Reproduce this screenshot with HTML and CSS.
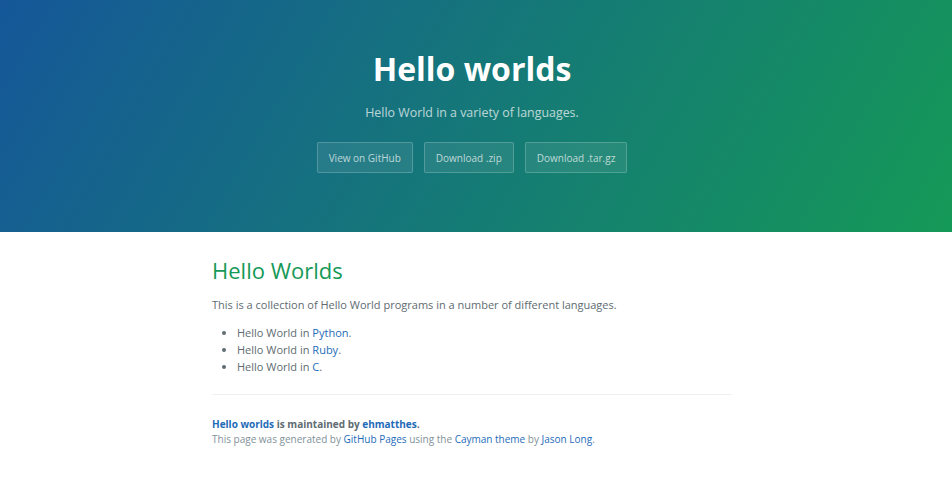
FILE: index.html
```html
<!DOCTYPE html>
<html lang="en">
<head>
<meta charset="UTF-8">
<title>Hello worlds</title>
<link rel="stylesheet" href="styles.css">
</head>
<body>
<section class="page-header">
  <h1 class="project-name">Hello worlds</h1>
  <h2 class="project-tagline">Hello World in a variety of languages.</h2>
  <div class="btns">
    <a href="#" class="btn">View on GitHub</a>
    <a href="#" class="btn">Download .zip</a>
    <a href="#" class="btn">Download .tar.gz</a>
  </div>
</section>
<section class="main-content">
  <h1 class="heading">Hello Worlds</h1>
  <p class="intro">This is a collection of Hello World programs in a number of different languages.</p>
  <ul class="list">
    <li>Hello World in <a href="#">Python</a>.</li>
    <li>Hello World in <a href="#">Ruby</a>.</li>
    <li>Hello World in <a href="#">C</a>.</li>
  </ul>
  <footer class="site-footer">
    <span class="owner"><a href="#">Hello worlds</a> is maintained by <a href="#">ehmatthes</a>.</span>
    <span class="credits">This page was generated by <a href="#">GitHub Pages</a> using the <a href="#">Cayman theme</a> by <a href="#">Jason Long</a>.</span>
  </footer>
</section>
</body>
</html>
```
FILE: styles.css
```css
html, body {
  margin: 0;
  padding: 0;
}
body {
  font-family: "Open Sans", "Helvetica Neue", Helvetica, Arial, sans-serif;
  color: #606c71;
  background: #fff;
}
a {
  color: #1e6bb8;
  text-decoration: none;
}
.page-header {
  box-sizing: border-box;
  height: 232px;
  padding: 47px 8px 0 0;
  display: flex;
  flex-direction: column;
  align-items: center;
  color: #fff;
  background-color: #159957;
  background-image: linear-gradient(120deg, #155799, #159957);
}
.project-name {
  margin: 0;
  font-size: 32px;
  line-height: 44px;
  font-weight: 700;
}
.project-tagline {
  margin: 12px 0 0;
  font-size: 12.4px;
  line-height: 20px;
  font-weight: 400;
  opacity: 0.7;
}
.btns {
  display: flex;
  gap: 11px;
  margin-top: 19px;
}
.btn {
  box-sizing: border-box;
  height: 31px;
  display: flex;
  align-items: center;
  padding: 0 11px;
  font-size: 10px;
  color: rgba(255, 255, 255, 0.7);
  background-color: rgba(255, 255, 255, 0.08);
  border: 1px solid rgba(255, 255, 255, 0.2);
  border-radius: 2px;
}
.main-content {
  box-sizing: border-box;
  width: 520px;
  margin-left: 212px;
  padding-top: 23px;
}
.heading {
  margin: 0;
  font-size: 22px;
  line-height: 30px;
  font-weight: 400;
  color: #159957;
}
.intro {
  margin: 11px 0 0;
  font-size: 11px;
  line-height: 17px;
}
.list {
  margin: 11px 0 0;
  padding-left: 25px;
  font-size: 11px;
  line-height: 17px;
}
.site-footer {
  margin-top: 19px;
  padding-top: 22px;
  border-top: 1px solid #eff0f1;
  display: flex;
  flex-direction: column;
  font-size: 10px;
  line-height: 15px;
}
.owner {
  font-weight: 700;
}
.credits {
  color: #819198;
}
```
